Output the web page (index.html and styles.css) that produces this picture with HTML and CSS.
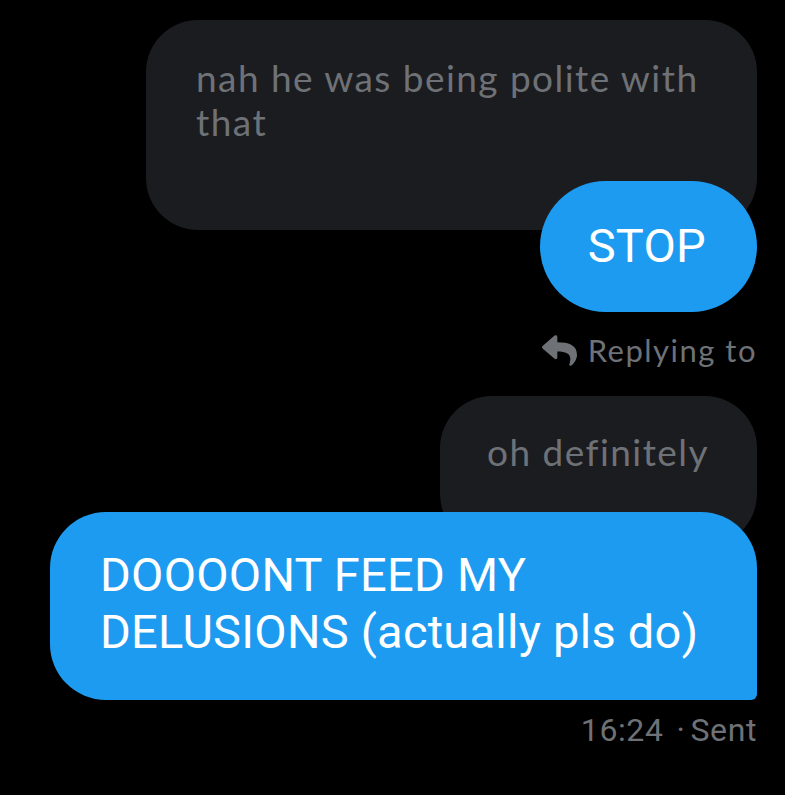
FILE: index.html
```html
<!DOCTYPE html>
<html lang="en">
<head>
<meta charset="utf-8">
<title>Messages</title>
<link rel="stylesheet" href="styles.css">
</head>
<body>
<main class="thread">
  <div class="quote quote-long">nah he was being polite with that</div>
  <div class="bubble bubble-pill">STOP</div>
  <div class="replying">
    <svg class="reply-icon" viewBox="0 0 512 512" aria-hidden="true"><path d="M8.309 189.836L184.313 37.851C199.719 24.546 224 35.347 224 56.015v80.053c160.629 1.839 288 34.032 288 186.258 0 61.441-39.581 122.309-83.333 154.132-13.653 9.931-33.111-2.533-28.077-18.631 45.344-145.012-21.507-183.51-176.59-185.742V360c0 20.7-24.3 31.453-39.687 18.164l-176.004-152c-11.071-9.562-11.086-26.753 0-36.328z"/></svg>
    <span>Replying to</span>
  </div>
  <div class="quote quote-short">oh definitely</div>
  <div class="bubble bubble-last">DOOOONT FEED MY DELUSIONS (actually pls do)</div>
  <div class="meta"><span class="time">16:24</span><span class="dot">·</span><span>Sent</span></div>
</main>
</body>
</html>
```
FILE: styles.css
```css
html, body {
  margin: 0;
  background: #000;
}

.thread {
  display: flex;
  flex-direction: column;
  align-items: flex-end;
  padding: 20px 28px 0 0;
}

.quote {
  box-sizing: border-box;
  background: #1b1c1f;
  color: #6e7277;
  font-family: Lato, "Open Sans", sans-serif;
  font-size: 37px;
  letter-spacing: 1.45px;
  line-height: 44px;
  border-radius: 52px;
}

.quote-long {
  max-width: 611px;
  height: 210px;
  padding: 36px 46px 0 50px;
}

.quote-short {
  width: 317px;
  height: 150px;
  padding: 34px 48px 0 40px;
  text-align: right;
  margin-top: 28px;
}

.bubble {
  box-sizing: border-box;
  background: #1d9bf0;
  color: #fff;
  font-family: Roboto, "Liberation Sans", sans-serif;
  font-size: 47px;
  letter-spacing: 0.25px;
  line-height: 57px;
}

.bubble-pill {
  margin-top: -49px;
  height: 131px;
  padding: 36px 51px 0 48px;
  border-radius: 66px;
}

.bubble-last {
  margin-top: -34px;
  max-width: 707px;
  height: 188px;
  padding: 34px 40px 0 50px;
  border-radius: 56px 56px 6px 56px;
}

.replying {
  display: flex;
  align-items: center;
  gap: 11px;
  margin-top: 20px;
  height: 36px;
  color: #6e7277;
  font-family: Lato, "Open Sans", sans-serif;
  font-size: 31px;
  letter-spacing: 1.5px;
}

.reply-icon {
  width: 35px;
  height: 35px;
  fill: #6e7277;
}

.meta {
  display: flex;
  margin-top: 10px;
  color: #6e7277;
  font-family: Roboto, "Liberation Sans", sans-serif;
  font-size: 32px;
  letter-spacing: 0.6px;
  line-height: 40px;
}

.time {
  margin-right: 13px;
}

.dot {
  margin-right: 5px;
}
```
